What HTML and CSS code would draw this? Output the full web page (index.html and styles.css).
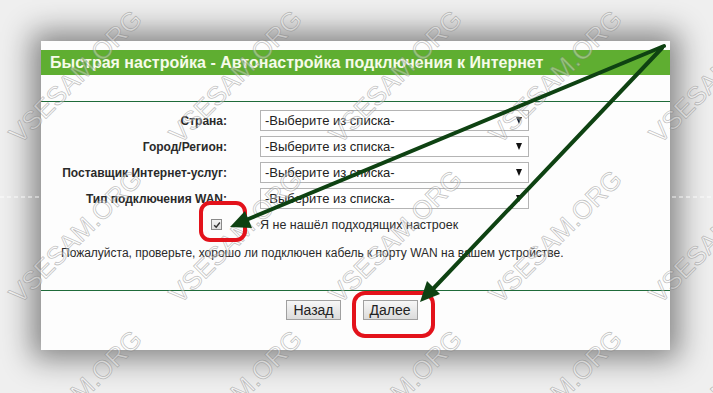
FILE: index.html
```
<!DOCTYPE html>
<html lang="ru">
<head>
<meta charset="utf-8">
<title>Быстрая настройка</title>
<link rel="stylesheet" href="styles.css">
</head>
<body>
<div class="stage">
  <div class="panel">
    <div class="title">Быстрая настройка - Автонастройка подключения к Интернет</div>
    <div class="rule top-rule"></div>
    <div class="form">
      <div class="label">Страна:</div>
      <div class="select"><span>-Выберите из списка-</span><i class="caret"></i></div>
      <div class="label">Город/Регион:</div>
      <div class="select"><span>-Выберите из списка-</span><i class="caret"></i></div>
      <div class="label">Поставщик Интернет-услуг:</div>
      <div class="select"><span>-Выберите из списка-</span><i class="caret"></i></div>
      <div class="label">Тип подключения WAN:</div>
      <div class="select"><span>-Выберите из списка-</span><i class="caret"></i></div>
      <div class="check-cell"><span class="checkbox"><svg viewBox="0 0 10 10" width="8" height="8"><path d="M1.5 5.2 L4 7.8 L8.6 1.8" fill="none" stroke="#333" stroke-width="1.8"/></svg></span></div>
      <div class="check-text">Я не нашёл подходящих настроек</div>
    </div>
    <p class="note">Пожалуйста, проверьте, хорошо ли подключен кабель к порту WAN на вашем устройстве.</p>
    <div class="rule bottom-rule"></div>
    <div class="buttons">
      <button class="btn">Назад</button>
      <button class="btn">Далее</button>
    </div>
  </div>
  <svg class="overlay" width="713" height="393" viewBox="0 0 713 393">
    <line x1="0" y1="197" x2="40" y2="197" class="dash"/>
    <line x1="672" y1="197" x2="713" y2="197" class="dash"/>
    <g class="wm">
      <text x="77" y="78" transform="rotate(-45 77 78)">VSESAM.ORG</text>
      <text x="237" y="78" transform="rotate(-45 237 78)">VSESAM.ORG</text>
      <text x="397" y="78" transform="rotate(-45 397 78)">VSESAM.ORG</text>
      <text x="557" y="78" transform="rotate(-45 557 78)">VSESAM.ORG</text>
      <text x="717" y="78" transform="rotate(-45 717 78)">VSESAM.ORG</text>
      <text x="77" y="238" transform="rotate(-45 77 238)">VSESAM.ORG</text>
      <text x="237" y="238" transform="rotate(-45 237 238)">VSESAM.ORG</text>
      <text x="397" y="238" transform="rotate(-45 397 238)">VSESAM.ORG</text>
      <text x="557" y="238" transform="rotate(-45 557 238)">VSESAM.ORG</text>
      <text x="717" y="238" transform="rotate(-45 717 238)">VSESAM.ORG</text>
      <text x="77" y="398" transform="rotate(-45 77 398)">VSESAM.ORG</text>
      <text x="237" y="398" transform="rotate(-45 237 398)">VSESAM.ORG</text>
      <text x="397" y="398" transform="rotate(-45 397 398)">VSESAM.ORG</text>
      <text x="557" y="398" transform="rotate(-45 557 398)">VSESAM.ORG</text>
      <text x="717" y="398" transform="rotate(-45 717 398)">VSESAM.ORG</text>
    </g>
    <rect x="201" y="203" width="44" height="37" rx="9" class="hl"/>
    <rect x="354" y="293" width="79" height="43" rx="11" class="hl"/>
    <line x1="664" y1="46" x2="246" y2="220" class="arrow"/>
    <polygon points="230,227 252,228 245,211" class="head"/>
    <line x1="662" y1="48" x2="432" y2="290" class="arrow"/>
    <polygon points="420,302 440,294 427,281" class="head"/>
  </svg>
</div>
</body>
</html>
```
FILE: styles.css
```
* { box-sizing: border-box; }
html, body {
  margin: 0;
  padding: 0;
  width: 713px;
  height: 393px;
  overflow: hidden;
  background: #efefef;
  font-family: "Liberation Sans", Arial, sans-serif;
}
.stage {
  position: relative;
  width: 713px;
  height: 393px;
  padding: 41px 0 0 41px;
}
.panel {
  width: 629px;
  height: 309px;
  background: #fdfdfd;
  box-shadow: 0 0 28px 9px rgba(0,0,0,0.45);
  padding-top: 9px;
  display: flex;
  flex-direction: column;
}
.title {
  height: 25px;
  background: #5fae31;
  color: #f6fbe9;
  font-weight: bold;
  font-size: 16px;
  line-height: 25px;
  padding-left: 9px;
  white-space: nowrap;
}
.rule {
  height: 1px;
  background: #1f6b3a;
}
.top-rule { margin-top: 26px; }
.form {
  display: grid;
  grid-template-columns: 186px 269px;
  column-gap: 33px;
  row-gap: 5px;
  grid-auto-rows: 21px;
  margin-top: 8px;
  align-items: center;
}
.label {
  text-align: right;
  font-weight: bold;
  font-size: 12px;
  color: #2a2a2a;
  white-space: nowrap;
}
.select {
  height: 21px;
  border: 1px solid #b4b4b4;
  background: #fff;
  display: flex;
  align-items: center;
  justify-content: space-between;
  padding: 0 6px 0 4px;
  font-size: 13px;
  color: #222;
}
.caret {
  width: 0;
  height: 0;
  border-left: 3.5px solid transparent;
  border-right: 3.5px solid transparent;
  border-top: 7px solid #111;
}
.check-cell {
  display: flex;
  justify-content: flex-end;
  padding-right: 5px;
}
.checkbox {
  width: 11px;
  height: 11px;
  border: 1px solid #8a8a8a;
  background: linear-gradient(#f4f4f4, #dedede);
  display: flex;
  align-items: center;
  justify-content: center;
}
.check-text {
  font-size: 12.5px;
  color: #2a2a2a;
  white-space: nowrap;
}
.note {
  margin: 11px 0 0 20px;
  font-size: 12px;
  color: #2a2a2a;
  line-height: 14px;
  white-space: nowrap;
}
.bottom-rule { margin-top: 30px; }
.buttons {
  display: flex;
  justify-content: center;
  gap: 22px;
  margin-top: 9px;
  padding-right: 7px;
}
.btn {
  height: 20px;
  padding: 0 6px;
  font-family: "Liberation Sans", Arial, sans-serif;
  font-size: 14px;
  color: #222;
  border: 1px solid #a0a0a0;
  border-radius: 0;
  background: linear-gradient(#f7f7f7, #dcdcdc);
  line-height: 18px;
}
.overlay {
  position: absolute;
  left: 0;
  top: 0;
  pointer-events: none;
}
.dash {
  stroke: rgba(255,255,255,0.85);
  stroke-width: 1;
  stroke-dasharray: 4 3;
}
.wm text {
  font-family: "Liberation Sans", Arial, sans-serif;
  font-size: 26px;
  text-anchor: middle;
  dominant-baseline: middle;
  fill: rgba(255,255,255,0.35);
  stroke: rgba(120,120,120,0.45);
  stroke-width: 0.8;
}
.hl {
  fill: none;
  stroke: #e3121b;
  stroke-width: 4;
}
.arrow {
  stroke: #0e4212;
  stroke-width: 4;
  stroke-linecap: round;
}
.head { fill: #0e4212; }
```
